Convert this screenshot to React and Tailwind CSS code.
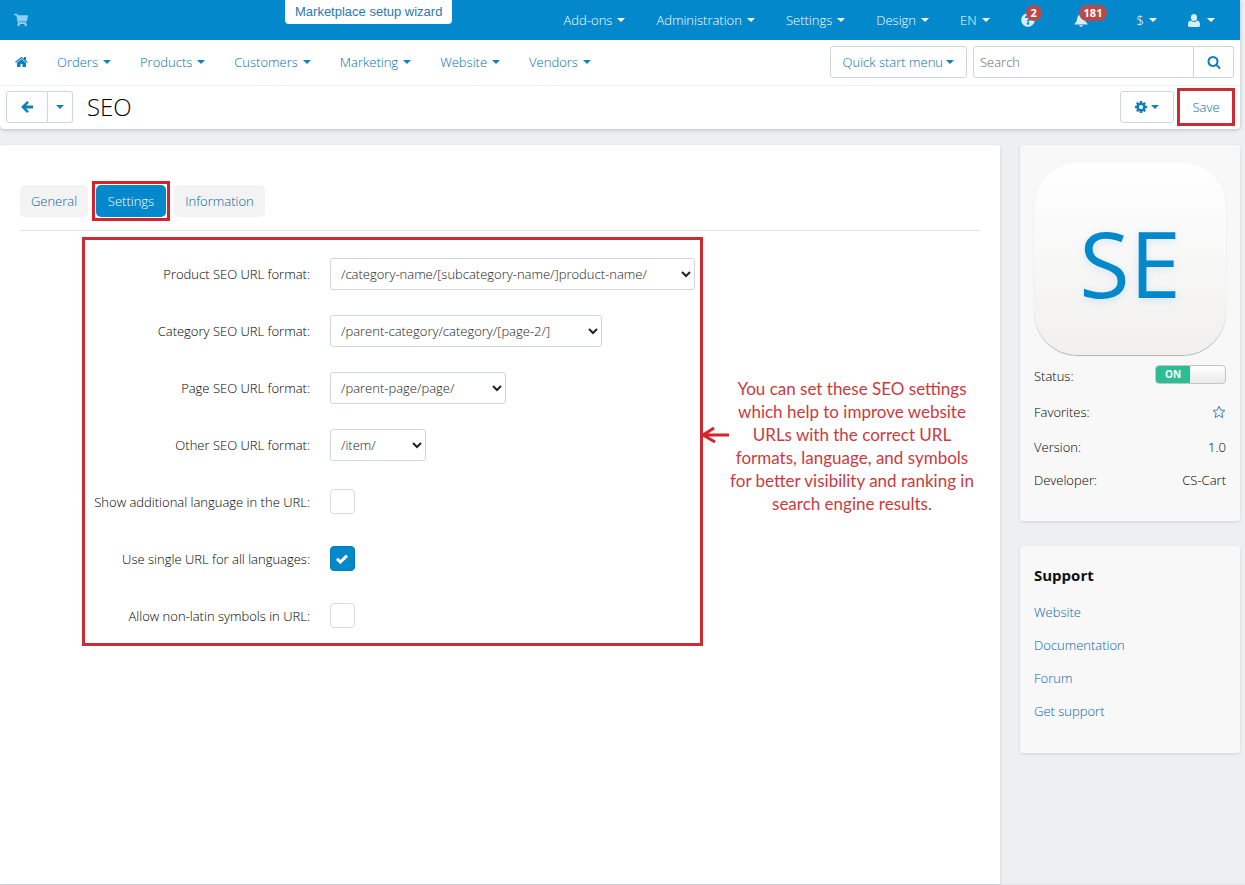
import { FaShoppingCart, FaQuestionCircle } from "react-icons/fa";

const topMenu = ["Add-ons", "Administration", "Settings", "Design"];
const mainMenu = ["Orders", "Products", "Customers", "Marketing", "Website", "Vendors"];

const selects = [
  { id: "product", label: "Product SEO URL format:", value: "/category-name/[subcategory-name/]product-name/", width: "w-[365px]" },
  { id: "category", label: "Category SEO URL format:", value: "/parent-category/category/[page-2/]", width: "w-[272px]" },
  { id: "page", label: "Page SEO URL format:", value: "/parent-page/page/", width: "w-[176px]" },
  { id: "other", label: "Other SEO URL format:", value: "/item/", width: "w-[96px]" },
];

const checks = [
  { id: "language", label: "Show additional language in the URL:", checked: false },
  { id: "single", label: "Use single URL for all languages:", checked: true },
  { id: "nonlatin", label: "Allow non-latin symbols in URL:", checked: false },
];

const noteLines = [
  "You can set these SEO settings",
  "which help to improve website",
  "URLs with the correct URL",
  "formats, language, and symbols",
  "for better visibility and ranking in",
  "search engine results.",
];

const supportLinks = ["Website", "Documentation", "Forum", "Get support"];

function Caret({ className = "border-t-[#0f7fbd]" }) {
  return <span className={`inline-block border-x-4 border-t-4 border-x-transparent ${className}`} />;
}

function HomeIcon() {
  return (
    <svg viewBox="0 0 1664 1792" className="h-3.5 w-[13px] fill-[#0f7fbd]" aria-hidden="true">
      <path d="M1408 992v480q0 26-19 45t-45 19h-384v-384h-256v384h-384q-26 0-45-19t-19-45v-480q0-1 .5-3t.5-3l575-474 575 474q1 2 1 6zm223-69l-62 74q-8 9-21 11h-3q-13 0-21-7l-692-577-692 577q-12 8-24 7-13-2-21-11l-62-74q-8-10-7-23.5t11-21.5l719-599q32-26 76-26t76 26l244 204v-195q0-14 9-23t23-9h192q14 0 23 9t9 23v408l219 182q10 8 11 21.5t-7 23.5z" />
    </svg>
  );
}

function SearchIcon() {
  return (
    <svg viewBox="0 0 1792 1792" className="size-3.5 fill-[#0f7fbd]" aria-hidden="true">
      <path d="M1216 832q0-185-131.5-316.5t-316.5-131.5-316.5 131.5-131.5 316.5 131.5 316.5 316.5 131.5 316.5-131.5 131.5-316.5zm512 832q0 52-38 90t-90 38q-54 0-90-38l-343-342q-179 124-399 124-143 0-273.5-55.5t-225-150-150-225-55.5-273.5 55.5-273.5 150-225 225-150 273.5-55.5 273.5 55.5 225 150 150 225 55.5 273.5q0 220-124 399l343 343q37 37 37 90z" />
    </svg>
  );
}

function CogIcon() {
  return (
    <svg viewBox="128 128 1536 1536" className="size-3 fill-[#0f7fbd]" aria-hidden="true">
      <path d="M1152 896q0-106-75-181t-181-75-181 75-75 181 75 181 181 75 181-75 75-181zm512-109v222q0 12-8 23t-20 13l-185 28q-19 54-39 91 35 50 107 138 10 12 10 25t-9 23q-27 37-99 108t-94 71q-12 0-26-9l-138-108q-44 23-91 38-16 136-29 186-7 28-36 28h-222q-14 0-24.5-8.5t-11.5-21.5l-28-184q-49-16-90-37l-141 107q-10 9-25 9-14 0-25-11-126-114-165-168-7-10-7-23 0-12 8-23 15-21 51-66.5t54-70.5q-27-50-41-99l-183-27q-13-2-21-12.5t-8-23.5v-222q0-12 8-23t19-13l186-28q14-46 39-92-40-57-107-138-10-12-10-24 0-10 9-23 26-36 98.5-107.5t94.5-71.5q13 0 26 10l138 107q44-23 91-38 16-136 29-186 7-28 36-28h222q14 0 24.5 8.5t11.5 21.5l28 184q49 16 90 37l142-107q9-9 24-9 13 0 25 10 129 119 165 170 7 8 7 22 0 12-8 23-15 21-51 66.5t-54 70.5q26 50 41 98l183 28q13 2 21 12.5t8 23.5z" />
    </svg>
  );
}

function BackIcon() {
  return (
    <svg viewBox="0 0 12 12" className="size-3 fill-none stroke-[#0f7fbd]" aria-hidden="true">
      <path d="M2 6H12" strokeWidth="3" />
      <path d="M7 .9 1.9 6 7 11.1" strokeWidth="2.6" />
    </svg>
  );
}

function BellIcon() {
  return (
    <svg viewBox="0 0 14 14" className="size-3.5 fill-current" aria-hidden="true">
      <path d="M7 .6c-.7 0-1.1.5-1.1 1.1C4 2.200 3.300 3.800 3.200 5.600 3 8.200 2.200 9.400.5 10.700V11.600H13.500V10.700C11.800 9.400 11 8.200 10.800 5.600 10.700 3.800 10 2.200 8.100 1.700 8.100 1.100 7.700.6 7 .6ZM5.200 12.200a1.800 1.500 0 0 0 3.600 0Z" />
    </svg>
  );
}

function UserIcon() {
  return (
    <svg viewBox="0 0 12 13" className="h-[13px] w-3 fill-current" aria-hidden="true">
      <ellipse cx="6" cy="3.600" rx="3.100" ry="3.500" />
      <path d="M2.600 6.600C.9 7.100 0 8.300 0 10v1.600C0 12.500.5 13 1.300 13h9.400c.8 0 1.300-.5 1.300-1.400V10c0-1.700-.9-2.900-2.600-3.400C8.500 7.500 7.300 8 6 8s-2.500-.5-3.400-1.400Z" />
    </svg>
  );
}

function Badge({ children }) {
  return (
    <span className="absolute -top-2 left-[5px] h-4 rounded-full bg-[#b94a48] px-[5px] text-[11px] leading-4 font-bold text-white">
      {children}
    </span>
  );
}

function TopBar() {
  return (
    <header className="flex h-10 items-center bg-[#0388cc] pr-[25px] pl-3.5 text-white">
      <a href="#cart" aria-label="View storefront" className="w-[271px] text-[#8fd0f2]">
        <FaShoppingCart className="size-3.5" />
      </a>
      <a href="#wizard" className="h-6 self-start rounded-b-[4px] bg-white px-2.5 font-['Liberation_Sans',Arial,sans-serif] text-[13px] leading-6 font-normal text-[#2a78b0]">
        Marketplace setup wizard
      </a>
      <nav className="ml-auto flex items-center gap-[31px]">
        {topMenu.map((item) => (
          <a key={item} href="#menu" className="flex items-center gap-[5px]">
            {item}
            <Caret className="border-t-white" />
          </a>
        ))}
        <a href="#lang" className="flex items-center gap-[5px]">EN<Caret className="border-t-white" /></a>
        <a href="#help" aria-label="Help" className="relative w-[22px] text-[#d8eefa]">
          <FaQuestionCircle className="size-3.5" />
          <Badge>2</Badge>
        </a>
        <a href="#notifications" aria-label="Notifications" className="relative w-8 text-[#d8eefa]">
          <BellIcon />
          <Badge>181</Badge>
        </a>
        <a href="#currency" className="flex items-center gap-[5px]">$<Caret className="border-t-white" /></a>
        <a href="#account" aria-label="Account" className="flex items-center gap-[7px] text-[#d8eefa]">
          <UserIcon />
          <Caret className="border-t-white" />
        </a>
      </nav>
    </header>
  );
}

function MainNav() {
  return (
    <div className="flex h-[46px] items-center border-b border-[#f0f0f0] pr-1.5 pb-px pl-[15px] text-[#0070ae]">
      <nav className="flex items-center gap-[29px]">
        <a href="#home" aria-label="Home"><HomeIcon /></a>
        {mainMenu.map((item) => (
          <a key={item} href="#menu" className="flex items-center gap-[5px]">
            {item}
            <Caret />
          </a>
        ))}
      </nav>
      <button type="button" className="mr-1.5 ml-auto flex h-8 items-center gap-[3px] rounded-[3px] border border-[#cfd6dd] px-3">
        Quick start menu
        <Caret />
      </button>
      <form className="flex h-8" onSubmit={(e) => e.preventDefault()}>
        <input type="search" aria-label="Search" placeholder="Search" className="w-[221px] rounded-l-[3px] border border-[#cfd6dd] px-1.5 text-[#333] outline-none placeholder:text-[#666]" />
        <button type="submit" aria-label="Submit search" className="flex w-10 items-center justify-center rounded-r-[3px] border border-l-0 border-[#cfd6dd]">
          <SearchIcon />
        </button>
      </form>
    </div>
  );
}

function TitleBar() {
  return (
    <div className="flex h-[43px] items-center pr-2 pb-px pl-1.5 text-[#0070ae]">
      <div className="flex h-8">
        <button type="button" aria-label="Back" className="flex w-[42px] items-center justify-center rounded-l-[3px] border border-[#cfd6dd]">
          <BackIcon />
        </button>
        <button type="button" aria-label="More" className="flex w-[25px] items-center justify-center rounded-r-[3px] border border-l-0 border-[#cfd6dd]">
          <Caret />
        </button>
      </div>
      <h1 className="ml-3.5 text-2xl font-light text-black">SEO</h1>
      <button type="button" aria-label="Tools" className="mr-1.5 ml-auto flex h-8 w-[54px] items-center justify-center gap-1 rounded-[3px] border border-[#cfd6dd]">
        <CogIcon />
        <Caret />
      </button>
      <button type="button" className="h-8 w-[52px] outline-[3px] outline-[#cb2c33]">Save</button>
    </div>
  );
}

function Tabs() {
  return (
    <div className="flex gap-2 border-b border-[#e2e2e2] pb-[13px] text-[#0a65a8]">
      <button type="button" className="h-8 w-[68px] rounded-[5px] bg-[#f3f3f3]">General</button>
      <div className="outline-[3px] outline-offset-1 outline-[#d4232b]">
        <button type="button" className="block h-8 w-[70px] rounded-[5px] bg-[#0388cc] text-white">Settings</button>
      </div>
      <button type="button" className="h-8 w-[91px] rounded-[5px] bg-[#f3f3f3]">Information</button>
    </div>
  );
}

function SettingsForm() {
  return (
    <form className="ml-[62px] flex w-[621px] shrink-0 flex-col gap-[25px] border-[3px] border-[#cb2c33] pt-[18px] pb-[11px]">
      {selects.map((s) => (
        <div key={s.id} className="flex h-8 items-center gap-5">
          <label htmlFor={s.id} className="w-[225px] text-right">{s.label}</label>
          <select id={s.id} className={`h-8 rounded-[3px] border border-[#cfd6dd] bg-white px-1.5 text-[#222] ${s.width}`}>
            <option>{s.value}</option>
          </select>
        </div>
      ))}
      {checks.map((c) => (
        <div key={c.id} className="flex h-8 items-center gap-5 pb-px">
          <label htmlFor={c.id} className="w-[225px] text-right">{c.label}</label>
          <span className="relative flex size-[25px]">
            <input id={c.id} type="checkbox" defaultChecked={c.checked} className="peer size-[25px] appearance-none rounded-[4px] border border-[#d9dbdd] bg-white checked:border-[#0379b6] checked:bg-[#0388cc]" />
            <svg viewBox="0 0 12 10" className="pointer-events-none absolute top-2 left-1.5 hidden h-2.5 w-3 fill-none stroke-white stroke-[3] peer-checked:block" aria-hidden="true">
              <path d="M1 4.800 4.400 8 11 1.600" />
            </svg>
          </span>
        </div>
      ))}
    </form>
  );
}

function Note() {
  return (
    <>
      <svg viewBox="0 0 28 16" className="mt-[190px] -ml-0.5 h-4 w-7 shrink-0 fill-none stroke-[#d8232a] stroke-[3]" aria-hidden="true">
        <path d="M28 8H3M13 1 2 8l12 7" />
      </svg>
      <p className="mt-[140px] mr-[5px] flex-1 text-center font-[Lato,sans-serif] text-[17px] leading-[23px] font-normal whitespace-nowrap text-[#cb3a40]">
        {noteLines.map((line) => (
          <span key={line} className="block">{line}</span>
        ))}
      </p>
    </>
  );
}

function Sidebar() {
  return (
    <aside className="flex w-[220px] shrink-0 flex-col gap-[25px]">
      <section className="rounded-[3px] bg-[#f8f8f8] px-3.5 pt-[18px] pb-[25px] shadow-[0_1px_3px_rgba(0,0,0,0.12)]">
        <div className="flex size-48 items-center justify-center rounded-[44px] bg-linear-to-b from-white to-[#f1f0ef] pt-2 text-[92px] leading-none font-normal text-[#0388cc] shadow-[0_1px_1px_rgba(0,0,0,0.3)] [text-shadow:0_2px_8px_rgba(3,136,204,0.15)]">
          SE
        </div>
        <dl className="mt-[3px]">
          <div className="flex h-9 items-center justify-between">
            <dt>Status:</dt>
            <dd className="pb-1">
              <button type="button" role="switch" aria-checked="true" aria-label="Status" className="flex h-[19px] w-[71px] overflow-hidden rounded-[4px] border border-[#c4c4c4] bg-linear-to-b from-white to-[#e9e9e9]">
                <span className="h-full w-[34px] bg-[#2dbd94] text-[10px] leading-[17px] font-bold text-white">ON</span>
              </button>
            </dd>
          </div>
          <div className="flex h-9 items-center justify-between">
            <dt>Favorites:</dt>
            <dd>
              <button type="button" aria-label="Add to favorites" className="block text-[#3b7fc4]">
                <svg viewBox="0 0 14 14" className="size-3.5 fill-none stroke-current" aria-hidden="true">
                  <path d="M7 1.200 8.700 5.100 13 5.400 9.800 8.200 10.800 12.600 7 10.300 3.200 12.600 4.200 8.200 1 5.400 5.300 5.100Z" />
                </svg>
              </button>
            </dd>
          </div>
          <div className="flex h-[33px] items-center justify-between">
            <dt>Version:</dt>
            <dd>1.0</dd>
          </div>
          <div className="flex h-[33px] items-center justify-between">
            <dt>Developer:</dt>
            <dd>CS-Cart</dd>
          </div>
        </dl>
      </section>
      <section className="rounded-[3px] bg-[#f8f8f8] px-3.5 pt-[19px] pb-[26px] shadow-[0_1px_3px_rgba(0,0,0,0.12)]">
        <h2 className="mb-2.5 text-[15px] leading-5 font-bold text-[#111]">Support</h2>
        <ul className="text-[#0a65a8]">
          {supportLinks.map((link) => (
            <li key={link} className="flex h-[33px] items-center"><a href="#support">{link}</a></li>
          ))}
        </ul>
      </section>
    </aside>
  );
}

export default function App() {
  return (
    <div className="flex min-h-screen flex-col border-b border-[#dfe3e6] bg-[#ecf0f3] pr-[5px] font-['Open_Sans',sans-serif] text-[13px] leading-5 font-light text-black">
      <div className="rounded-b-[4px] bg-white shadow-[0_1px_4px_rgba(0,0,0,0.2)]">
        <TopBar />
        <MainNav />
        <TitleBar />
      </div>
      <div className="mt-4 flex flex-1 gap-5">
        <main className="min-w-0 flex-1 rounded-t-[3px] bg-white px-5 pt-10 shadow-[0_1px_3px_rgba(0,0,0,0.15)]">
          <Tabs />
          <div className="mt-1.5 flex items-start">
            <SettingsForm />
            <Note />
          </div>
        </main>
        <Sidebar />
      </div>
    </div>
  );
}
